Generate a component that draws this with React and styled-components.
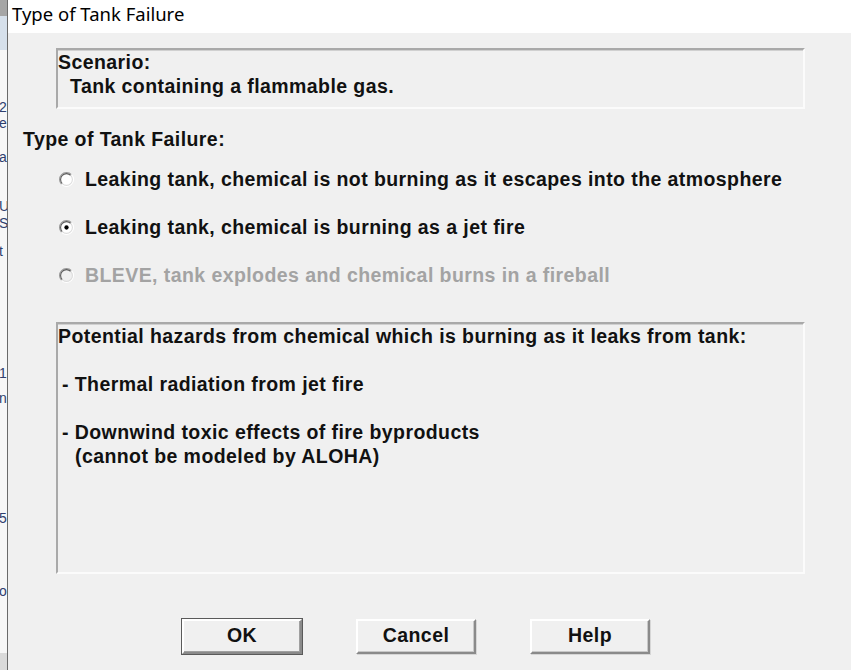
import React from "react";
import styled, { createGlobalStyle } from "styled-components";

const GlobalStyle = createGlobalStyle`
  html, body {
    margin: 0;
    padding: 0;
    background: #f0f0f0;
  }
  body {
    font-family: "Liberation Sans", Arial, sans-serif;
  }
`;

const Screen = styled.div`
  width: 851px;
  height: 670px;
  display: flex;
  overflow: hidden;
`;

/* the window behind the dialog, only a sliver shows */
const BackStrip = styled.div`
  width: 7px;
  flex-shrink: 0;
  display: flex;
  flex-direction: column;
  overflow: hidden;
  background: linear-gradient(
    to bottom,
    #a6a6a6 0px,
    #a6a6a6 16px,
    #d6e0eb 16px,
    #d6e0eb 50px,
    #f7f7f7 50px,
    #f7f7f7 653px,
    #dadada 653px
  );
`;

const BackGlyph = styled.span`
  display: block;
  height: 15px;
  margin-top: ${(p) => p.$gap}px;
  margin-left: -1px;
  font-family: "Liberation Sans", Arial, sans-serif;
  font-size: 14px;
  line-height: 15px;
  color: #2f3f6e;
`;

const Dialog = styled.div`
  flex: 1;
  display: flex;
  flex-direction: column;
  border-left: 1px solid #6a6a6a;
`;

const TitleBar = styled.div`
  height: 33px;
  background: #ffffff;
  display: flex;
  align-items: center;
  padding-left: 4px;
  padding-bottom: 7px;
  box-sizing: border-box;
  font-family: "Noto Sans", "Open Sans", sans-serif;
  font-size: 18.5px;
  color: #000;
`;

const Body = styled.div`
  flex: 1;
  background: #f0f0f0;
  display: flex;
  flex-direction: column;
  font-family: "Liberation Sans", Arial, sans-serif;
  font-weight: bold;
  font-size: 19.5px;
  letter-spacing: 0.42px;
  line-height: 24px;
  color: #111;
`;

const Sunken = styled.div`
  box-sizing: border-box;
  margin-left: 48px;
  width: 749px;
  height: ${(p) => p.$h}px;
  margin-top: ${(p) => p.$top}px;
  border-style: solid;
  border-width: 2px;
  border-color: #a9a9a9 #fbfbfb #fbfbfb #a9a9a9;
  box-shadow: inset 0 1px 0 #d0d0d0;
  padding: 0;
`;

const Line = styled.div`
  height: 24px;
  white-space: pre;
  padding-left: ${(p) => p.$indent || 0}px;
`;

const Heading = styled.div`
  margin-top: 18px;
  margin-left: 15px;
  height: 24px;
`;

const RadioList = styled.div`
  margin-top: 16px;
  margin-left: 51px;
  display: flex;
  flex-direction: column;
  gap: 24px;
`;

const RadioRow = styled.div`
  display: flex;
  align-items: center;
  gap: 11px;
  height: 24px;
  color: ${(p) => (p.$disabled ? "#a3a3a3" : "#111")};
`;

const Buttons = styled.div`
  margin-top: 45px;
  margin-left: 174px;
  display: flex;
  gap: 54px;
`;

const Button = styled.button`
  width: 120px;
  height: 35px;
  box-sizing: border-box;
  background: #f0f0f0;
  font-family: "Liberation Sans", Arial, sans-serif;
  font-weight: bold;
  font-size: 19.5px;
  letter-spacing: 0.42px;
  color: #111;
  padding: 0 0 3px;
  border-style: solid;
  border-width: 2px;
  border-color: #ffffff #8a8a8a #8a8a8a #ffffff;
  box-shadow: ${(p) =>
    p.$default
      ? "0 0 0 1px #5a5a5a, inset -1px -1px 0 #a0a0a0"
      : "inset -1px -1px 0 #c8c8c8, 1px 1px 0 #d6d6d6"};
`;

const Radio = ({ checked, disabled }) => (
  <svg width="15" height="15" viewBox="0 0 14 14">
    <circle cx="7" cy="7" r="6.5" fill={disabled ? "#f0f0f0" : "#ffffff"} />
    <path d="M2.4 11.6 A6.5 6.5 0 0 1 11.6 2.4" fill="none" stroke="#9a9a9a" strokeWidth="1" />
    <path d="M3.1 10.9 A5.5 5.5 0 0 1 10.9 3.1" fill="none" stroke="#5a5a5a" strokeWidth="1" />
    <path d="M11.6 2.4 A6.5 6.5 0 0 1 2.4 11.6" fill="none" stroke="#ffffff" strokeWidth="1" />
    <path d="M10.9 3.1 A5.5 5.5 0 0 1 3.1 10.9" fill="none" stroke="#dcdcdc" strokeWidth="1" />
    {checked && <circle cx="7" cy="7" r="2" fill="#000" />}
  </svg>
);

const backGlyphs = [
  ["2", 100], ["e", 1], ["a", 19], ["U", 34], ["S", 2], ["t", 13],
  ["1", 107], ["n", 10], ["5", 105], ["o", 58],
];

const options = [
  { label: "Leaking tank, chemical is not burning as it escapes into the atmosphere" },
  { label: "Leaking tank, chemical is burning as a jet fire", checked: true },
  { label: "BLEVE, tank explodes and chemical burns in a fireball", disabled: true },
];

export default function App() {
  return (
    <>
      <GlobalStyle />
      <Screen>
        <BackStrip>
          {backGlyphs.map(([g, gap], i) => (
            <BackGlyph key={i} $gap={gap}>
              {g}
            </BackGlyph>
          ))}
        </BackStrip>
        <Dialog>
          <TitleBar>Type of Tank Failure</TitleBar>
          <Body>
            <Sunken $top={15} $h={61}>
              <Line>Scenario:</Line>
              <Line $indent={12}>Tank containing a flammable gas.</Line>
            </Sunken>

            <Heading>Type of Tank Failure:</Heading>

            <RadioList>
              {options.map((o) => (
                <RadioRow key={o.label} $disabled={o.disabled}>
                  <Radio checked={o.checked} disabled={o.disabled} />
                  {o.label}
                </RadioRow>
              ))}
            </RadioList>

            <Sunken $top={35} $h={252}>
              <Line>Potential hazards from chemical which is burning as it leaks from tank:</Line>
              <Line />
              <Line $indent={4}>- Thermal radiation from jet fire</Line>
              <Line />
              <Line $indent={4}>- Downwind toxic effects of fire byproducts</Line>
              <Line $indent={17}>(cannot be modeled by ALOHA)</Line>
            </Sunken>

            <Buttons>
              <Button $default>OK</Button>
              <Button>Cancel</Button>
              <Button>Help</Button>
            </Buttons>
          </Body>
        </Dialog>
      </Screen>
    </>
  );
}
